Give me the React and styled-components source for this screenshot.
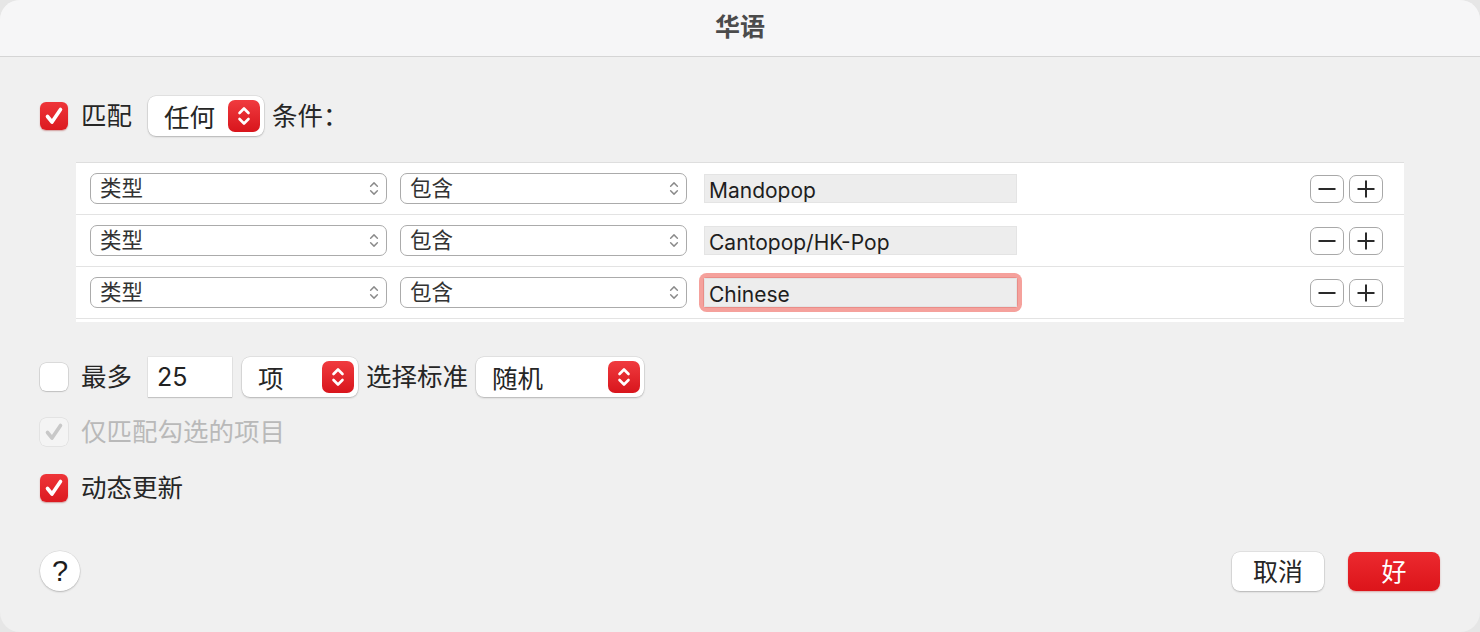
import React from "react";
import styled, { createGlobalStyle, css } from "styled-components";

const Global = createGlobalStyle`
  html, body { margin: 0; padding: 0; }
  body {
    background: #e6e6e6;
    font-family: "Inter", "Noto Sans CJK SC", sans-serif;
    -webkit-font-smoothing: antialiased;
  }
`;

const CJK = `"Noto Sans CJK SC", "Inter", sans-serif`;
const LATIN = `"Inter", "Noto Sans CJK SC", sans-serif`;

const Window = styled.div`
  width: 1480px;
  height: 632px;
  border-radius: 20px;
  overflow: hidden;
  background: #f0f0f0;
  display: flex;
  flex-direction: column;
`;

const TitleBar = styled.div`
  height: 57px;
  box-sizing: border-box;
  flex: none;
  background: #f6f6f7;
  border-bottom: 1px solid #d5d5d5;
  display: flex;
  align-items: center;
  justify-content: center;
  padding-bottom: 7px;
  font-family: ${CJK};
  font-weight: 700;
  font-size: 25px;
  color: #4b4b4b;
`;

const Body = styled.div`
  flex: 1;
  display: flex;
  flex-direction: column;
  padding: 39px 40px 0 40px;
`;

const Line = styled.div`
  display: flex;
  align-items: center;
  height: ${(p) => p.$h || 40}px;
  margin-top: ${(p) => p.$mt || 0}px;
`;

const Label = styled.span`
  font-family: ${CJK};
  font-size: 25.5px;
  color: ${(p) => (p.$disabled ? "#b9b9b9" : "#262626")};
  margin-left: ${(p) => p.$ml || 0}px;
  margin-right: ${(p) => p.$mr || 0}px;
  white-space: nowrap;
  line-height: 1;
  position: relative;
  top: -2px;
`;

const Box = styled.div`
  width: 28px;
  height: 28px;
  flex: none;
  box-sizing: border-box;
  border-radius: 6px;
  display: flex;
  align-items: center;
  justify-content: center;
  ${(p) =>
    p.$state === "on" &&
    css`
      background: linear-gradient(#ee3539, #dc1a20);
      box-shadow: 0 1px 1.5px rgba(150, 0, 0, 0.35);
    `}
  ${(p) =>
    p.$state === "off" &&
    css`
      background: #fff;
      box-shadow: 0 0 0 0.5px rgba(0, 0, 0, 0.18), 0 1px 1.5px rgba(0, 0, 0, 0.12);
    `}
  ${(p) =>
    p.$state === "disabled" &&
    css`
      background: #f4f4f4;
      box-shadow: 0 0 0 0.5px rgba(0, 0, 0, 0.1);
    `}
`;

const Check = ({ color }) => (
  <svg width="22" height="22" viewBox="0 0 22 22">
    <path
      d="M4.5 11.5 L9 17 L17.5 4.5"
      fill="none"
      stroke={color}
      strokeWidth="3.6"
      strokeLinecap="round"
      strokeLinejoin="round"
    />
  </svg>
);

const CheckBox = ({ state }) => (
  <Box $state={state}>
    {state === "on" && <Check color="#fff" />}
    {state === "disabled" && <Check color="#c8c8c8" />}
  </Box>
);

const Popup = styled.div`
  width: ${(p) => p.$w}px;
  height: 40px;
  box-sizing: border-box;
  flex: none;
  background: #fff;
  border-radius: 8px;
  box-shadow: 0 0 0 0.5px rgba(0, 0, 0, 0.12), 0 1px 2px rgba(0, 0, 0, 0.2);
  display: flex;
  align-items: center;
  justify-content: space-between;
  padding: 0 4px 0 16px;
  font-family: ${CJK};
  font-size: 25.5px;
  color: #262626;
  & > span {
    position: relative;
    top: -1px;
  }
`;

const Stepper = styled.div`
  width: 32px;
  height: 32px;
  border-radius: 7px;
  background: linear-gradient(#f03b3f, #d8151c);
  display: flex;
  align-items: center;
  justify-content: center;
`;

const Chevrons = ({ color, w = 16, h = 24, sw = 2.6 }) => (
  <svg width={w} height={h} viewBox="0 0 16 24">
    <path
      d="M3.5 9 L8 4.5 L12.5 9 M3.5 15 L8 19.5 L12.5 15"
      fill="none"
      stroke={color}
      strokeWidth={sw}
      strokeLinecap="round"
      strokeLinejoin="round"
    />
  </svg>
);

const PopupButton = ({ w, children }) => (
  <Popup $w={w}>
    <span>{children}</span>
    <Stepper>
      <Chevrons color="#fff" />
    </Stepper>
  </Popup>
);

const Table = styled.div`
  margin: 26px 0 0 36px;
  width: 1328px;
  background: #fff;
  border-top: 1px solid #dedede;
  padding-bottom: 3px;
  display: flex;
  flex-direction: column;
`;

const Row = styled.div`
  height: 51px;
  border-bottom: 1px solid #e3e3e3;
  display: flex;
  align-items: center;
  padding: 0 21px 0 14px;
`;

const RowSelect = styled.div`
  width: ${(p) => p.$w}px;
  height: 31px;
  box-sizing: border-box;
  margin-right: ${(p) => p.$mr}px;
  border: 1.5px solid #ababab;
  border-radius: 7px;
  display: flex;
  align-items: center;
  justify-content: space-between;
  padding: 0 6px 0 9px;
  font-family: ${CJK};
  font-size: 21.5px;
  color: #333;
  flex: none;
  & > span {
    position: relative;
    top: -2px;
  }
`;

const FieldWrap = styled.div`
  width: 313px;
  height: 29px;
  flex: none;
  border-radius: 2px;
  ${(p) =>
    p.$focus &&
    css`
      box-shadow: 0 0 0 1px #e98d88, 0 0 0 5px #f5a19c;
      border-radius: 3px;
    `}
`;

const Field = styled.div`
  width: 100%;
  height: 100%;
  box-sizing: border-box;
  background: #ededed;
  border: 1px solid #e4e4e4;
  display: flex;
  align-items: center;
  padding: 3px 0 0 4px;
  font-family: ${LATIN};
  font-size: 21px;
  color: #1e1e1e;
`;

const Spacer = styled.div`
  flex: 1;
`;

const SmallBtn = styled.div`
  width: 34px;
  height: 28px;
  box-sizing: border-box;
  border: 1.5px solid #a8a8a8;
  border-radius: 7px;
  display: flex;
  align-items: center;
  justify-content: center;
  margin-left: ${(p) => p.$ml || 0}px;
  background: #fff;
`;

const Minus = () => (
  <svg width="20" height="20" viewBox="0 0 20 20">
    <path d="M1.5 10 H18.5" stroke="#2a2a2a" strokeWidth="2" />
  </svg>
);
const Plus = () => (
  <svg width="20" height="20" viewBox="0 0 20 20">
    <path d="M1.5 10 H18.5 M10 1.5 V18.5" stroke="#2a2a2a" strokeWidth="2" />
  </svg>
);

const NumberField = styled.div`
  width: 84px;
  height: 40px;
  box-sizing: border-box;
  background: #fff;
  box-shadow: 0 0 0 0.5px rgba(0, 0, 0, 0.08), 0 1px 1px rgba(0, 0, 0, 0.15);
  display: flex;
  align-items: center;
  padding-left: 9px;
  font-family: ${LATIN};
  font-size: 25px;
  color: #222;
  margin-right: 10px;
  flex: none;
`;

const Footer = styled.div`
  margin-top: 49px;
  display: flex;
  align-items: center;
`;

const Help = styled.div`
  width: 40px;
  height: 40px;
  border-radius: 50%;
  background: #fff;
  box-shadow: 0 0 0 0.5px rgba(0, 0, 0, 0.1), 0 1px 2px rgba(0, 0, 0, 0.2);
  display: flex;
  align-items: center;
  justify-content: center;
  font-family: "Liberation Sans", sans-serif;
  font-weight: 500;
  font-size: 29px;
  color: #1c1c1c;
`;

const Button = styled.div`
  width: 92px;
  height: 39px;
  border-radius: 8px;
  display: flex;
  align-items: center;
  justify-content: center;
  font-family: ${CJK};
  font-size: 25px;
  margin-left: ${(p) => p.$ml || 0}px;
  & > span {
    position: relative;
    top: -1px;
  }
  ${(p) =>
    p.$primary
      ? css`
          background: linear-gradient(#ec2a2f, #dc141a);
          color: #fff;
          box-shadow: 0 1px 2px rgba(160, 0, 0, 0.3);
        `
      : css`
          background: #fff;
          color: #262626;
          box-shadow: 0 0 0 0.5px rgba(0, 0, 0, 0.12), 0 1px 2px rgba(0, 0, 0, 0.2);
        `}
`;

const rows = [
  { value: "Mandopop" },
  { value: "Cantopop/HK-Pop" },
  { value: "Chinese", focus: true },
];

export default function App() {
  return (
    <>
      <Global />
      <Window>
        <TitleBar>华语</TitleBar>
        <Body>
          <Line>
            <CheckBox state="on" />
            <Label $ml={13} $mr={16}>匹配</Label>
            <PopupButton w={116}>任何</PopupButton>
            <Label $ml={8}>条件：</Label>
          </Line>

          <Table>
            {rows.map((r, i) => (
              <Row key={i}>
                <RowSelect $w={297} $mr={13}>
                  <span>类型</span>
                  <Chevrons color="#8a8a8a" w={12} h={19} sw={1.9} />
                </RowSelect>
                <RowSelect $w={287} $mr={17}>
                  <span>包含</span>
                  <Chevrons color="#8a8a8a" w={12} h={19} sw={1.9} />
                </RowSelect>
                <FieldWrap $focus={r.focus}>
                  <Field>{r.value}</Field>
                </FieldWrap>
                <Spacer />
                <SmallBtn>
                  <Minus />
                </SmallBtn>
                <SmallBtn $ml={5}>
                  <Plus />
                </SmallBtn>
              </Row>
            ))}
          </Table>

          <Line $mt={35}>
            <CheckBox state="off" />
            <Label $ml={13} $mr={16}>最多</Label>
            <NumberField>25</NumberField>
            <PopupButton w={116}>项</PopupButton>
            <Label $ml={8} $mr={8}>选择标准</Label>
            <PopupButton w={168}>随机</PopupButton>
          </Line>

          <Line $mt={21} $h={28}>
            <CheckBox state="disabled" />
            <Label $ml={13} $disabled>仅匹配勾选的项目</Label>
          </Line>

          <Line $mt={28} $h={28}>
            <CheckBox state="on" />
            <Label $ml={13}>动态更新</Label>
          </Line>

          <Footer>
            <Help>?</Help>
            <Spacer />
            <Button><span>取消</span></Button>
            <Button $primary $ml={24}><span>好</span></Button>
          </Footer>
        </Body>
      </Window>
    </>
  );
}
